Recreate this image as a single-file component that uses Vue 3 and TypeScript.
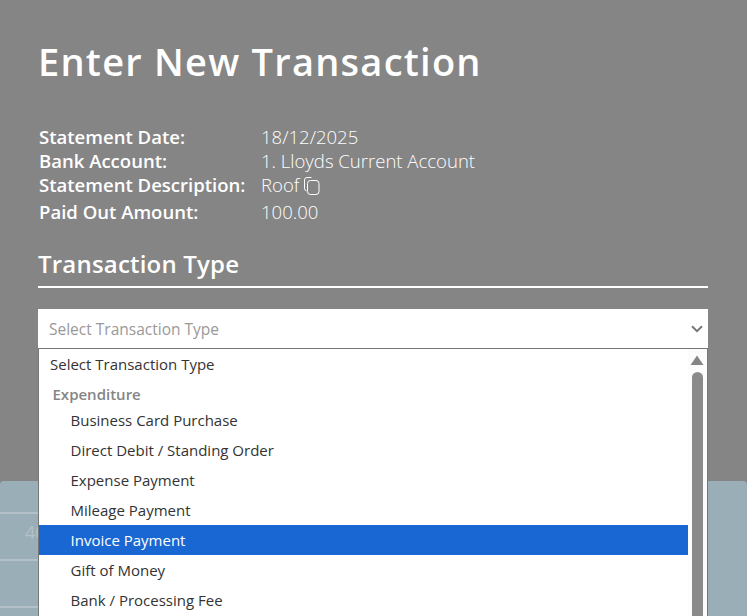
<script setup lang="ts">
interface Fact { label: string; value: string; copy?: boolean; cls?: string }
const facts: Fact[] = [
  { label: 'Statement Date:', value: '18/12/2025' },
  { label: 'Bank Account:', value: '1. Lloyds Current Account' },
  { label: 'Statement Description:', value: 'Roof', copy: true },
  { label: 'Paid Out Amount:', value: '100.00', cls: 'spaced' },
]
const options = [
  'Business Card Purchase',
  'Direct Debit / Standing Order',
  'Expense Payment',
  'Mileage Payment',
  'Invoice Payment',
  'Gift of Money',
  'Bank / Processing Fee',
  'Transfer',
]
const active = 'Invoice Payment'
</script>

<template>
  <div class="page">
    <section class="modal">
      <h1 class="title">Enter New Transaction</h1>
      <dl class="facts">
        <div v-for="f in facts" :key="f.label" class="fact" :class="f.cls">
          <dt>{{ f.label }}</dt>
          <dd>
            {{ f.value }}
            <svg v-if="f.copy" class="copy" width="16" height="18" viewBox="0 0 16 18" fill="none" stroke="#fff" stroke-width="1">
              <path d="M7.5 0.5H3a2.5 2.5 0 0 0-2.5 2.5v8.5a2.5 2.5 0 0 0 2 2.4" />
              <rect x="3.5" y="3.5" width="11.5" height="14" rx="3" />
            </svg>
          </dd>
        </div>
      </dl>
      <h2 class="section">Transaction Type</h2>
      <div class="select-wrap">
        <div class="select">
          <span>Select Transaction Type</span>
          <svg width="12" height="8" viewBox="0 0 12 8" fill="none" stroke="#777" stroke-width="2">
            <path d="M1 1.2l5 5 5-5" />
          </svg>
        </div>
        <div class="menu">
          <div class="list">
            <div class="opt first">Select Transaction Type</div>
            <div class="group">Expenditure</div>
            <div v-for="o in options" :key="o" class="opt child" :class="{ on: o === active }">{{ o }}</div>
          </div>
          <div class="scroll">
            <svg class="arrow" width="14" height="10" viewBox="0 0 14 10"><path d="M7 0.5L13.5 10H0.5z" fill="#858585" /></svg>
            <div class="thumb"></div>
          </div>
        </div>
      </div>
    </section>
    <section class="behind">
      <div class="row"><span class="num">40</span></div>
      <div class="row"></div>
      <div class="row"></div>
    </section>
  </div>
</template>

<style scoped>
.page {
  width: 747px;
  height: 616px;
  overflow: hidden;
  background: #858585;
  font-family: "Open Sans", "Liberation Sans", sans-serif;
  color: #fff;
  display: flex;
  flex-direction: column;
}
.modal {
  height: 481px;
  flex: none;
  padding: 37px 39px 0 38px;
  box-sizing: border-box;
  position: relative;
  z-index: 1;
}
.title {
  margin: 0;
  font-size: 38px;
  line-height: 49px;
  font-weight: 600;
  letter-spacing: 1.25px;
}
.facts {
  margin: 39px 0 0 1px;
  font-size: 18.55px;
  line-height: 24px;
}
.fact { display: flex; }
.fact.spaced { margin-top: 3px; }
.fact dt { width: 222px; font-weight: 600; }
.fact dd { margin: 0; font-weight: 300; display: flex; align-items: center; gap: 5px; }
.copy { margin-top: 2px; }
.section {
  margin: 24px 0 0;
  padding-bottom: 6px;
  border-bottom: 2px solid #fff;
  font-size: 24px;
  line-height: 32px;
  font-weight: 600;
  letter-spacing: 0.2px;
}
.select-wrap {
  margin-top: 21px;
  position: relative;
}
.select {
  height: 39px;
  background: #fff;
  box-sizing: border-box;
  padding: 1px 5px 0 11px;
  display: flex;
  align-items: center;
  justify-content: space-between;
  color: #999;
  font-size: 15.5px;
}
.menu {
  position: absolute;
  left: 0;
  top: 39px;
  width: 670px;
  height: 300px;
  box-sizing: border-box;
  background: #fff;
  border: 1px solid #767676;
  display: flex;
  color: #333;
  font-size: 15px;
}
.list { flex: 1; }
.opt {
  height: 30px;
  line-height: 30px;
  white-space: nowrap;
}
.opt.first { padding-left: 11px; }
.opt.child { padding-left: 31.5px; }
.opt.on { background: #1967d2; color: #fff; }
.group {
  height: 26px;
  line-height: 30px;
  padding-left: 13.5px;
  font-weight: 600;
  color: #858585;
}
.scroll {
  width: 19px;
  background: #fcfcfc;
  display: flex;
  flex-direction: column;
  align-items: center;
  box-sizing: border-box;
  padding: 6px 1px 0 0;
}
.arrow { display: block; }
.thumb {
  width: 11px;
  flex: 1;
  margin-top: 7px;
  background: #8a8a8a;
  border-radius: 6px 6px 0 0;
}
.behind {
  flex: 1;
  padding-top: 31px;
  background: #9aaeb8;
  border-radius: 4px 4px 0 0;
}
.row {
  height: 45px;
  border-top: 2px solid #b3c0c7;
  color: #b5c1c8;
  font-size: 18px;
  line-height: 36px;
  padding-left: 25px;
  box-sizing: content-box;
  width: 13px;
  overflow: hidden;
}
.num { display: block; }
</style>

<style>
html, body { margin: 0; overflow: hidden; }
</style>
